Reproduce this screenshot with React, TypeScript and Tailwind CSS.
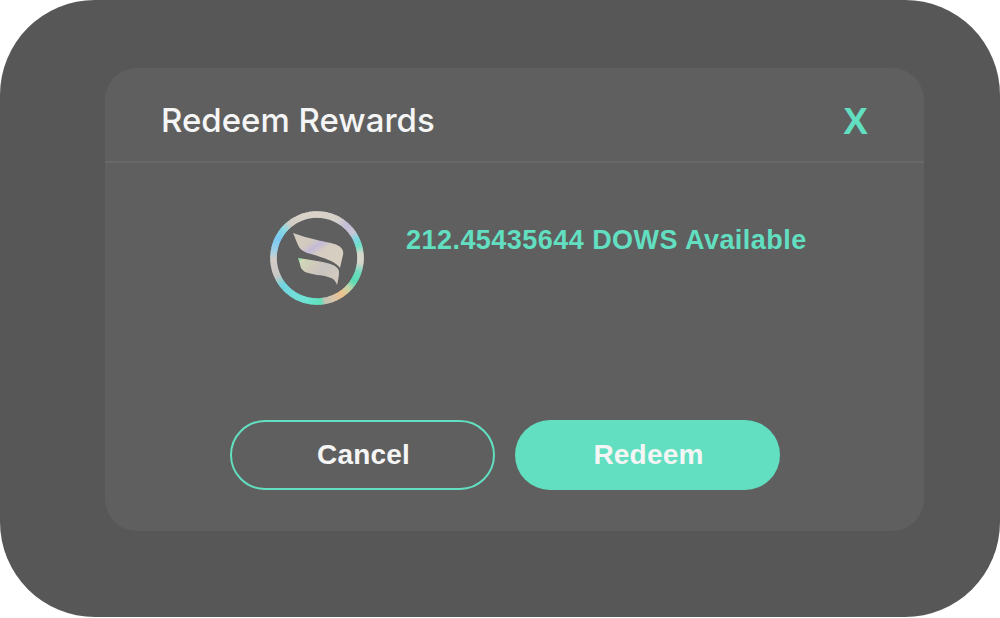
const stops: [number, string][] = [
  [0, "#d9d2c6"], [28, "#d6d0cc"], [42, "#c4bcd8"], [55, "#c9c6d4"], [64, "#7ed6e2"], [74, "#6fe0c4"], [84, "#d8d8cc"],
  [96, "#d9d4cc"], [108, "#74dcc0"], [122, "#55dcb4"], [134, "#c8d4a8"], [146, "#eec28e"], [158, "#d8c4aa"],
  [170, "#c0c4b4"], [175, "#5fe0b8"], [195, "#6ee4d4"], [215, "#74dcdc"], [232, "#70d4e0"], [246, "#c8c8c4"],
  [268, "#d4ccc6"], [280, "#a0d0ea"], [296, "#7cc8f4"], [310, "#86d8e4"], [322, "#d0ccc4"], [340, "#d8d2c8"], [360, "#d9d2c6"],
];

function hexToRgb(h: string) {
  return [1, 3, 5].map((i) => parseInt(h.slice(i, i + 2), 16));
}

function colorAt(a: number) {
  for (let i = 0; i < stops.length - 1; i++) {
    const [a0, c0] = stops[i];
    const [a1, c1] = stops[i + 1];
    if (a >= a0 && a <= a1) {
      const t = (a - a0) / (a1 - a0);
      const x = hexToRgb(c0);
      const y = hexToRgb(c1);
      return `rgb(${x.map((v, k) => Math.round(v + (y[k] - v) * t)).join(",")})`;
    }
  }
  return stops[0][1];
}

function Logo() {
  const cx = 48;
  const cy = 48;
  const r = 43.5;
  const segs = Array.from({ length: 120 }, (_, i) => i * 3);
  const pt = (a: number) => {
    const rad = ((a - 90) * Math.PI) / 180;
    return `${(cx + r * Math.cos(rad)).toFixed(2)} ${(cy + r * Math.sin(rad)).toFixed(2)}`;
  };
  return (
    <svg width="96" height="96" viewBox="0 0 96 96" className="block shrink-0">
      <defs>
        <linearGradient id="wingA" x1="0" y1="0" x2="1" y2="1">
          <stop offset="0" stopColor="#d4ccc0" />
          <stop offset="0.3" stopColor="#d2cabe" />
          <stop offset="0.42" stopColor="#c4bad8" />
          <stop offset="0.55" stopColor="#d6cdc0" />
          <stop offset="1" stopColor="#d8d0c4" />
        </linearGradient>
        <linearGradient id="wingB" x1="0" y1="0" x2="1" y2="0.5">
          <stop offset="0" stopColor="#7ee8a8" />
          <stop offset="0.12" stopColor="#d0d8b8" />
          <stop offset="0.45" stopColor="#cfc8bc" />
          <stop offset="0.65" stopColor="#c8c4c0" />
          <stop offset="1" stopColor="#d2cabe" />
        </linearGradient>
        <filter id="soft" x="-5%" y="-5%" width="110%" height="110%">
          <feGaussianBlur stdDeviation="0.5" />
        </filter>
      </defs>
      <g filter="url(#soft)">
        {segs.map((a) => (
          <path
            key={a}
            d={`M${pt(a)} A${r} ${r} 0 0 1 ${pt(a + 5)}`}
            fill="none"
            stroke={colorAt(a + 1.5)}
            strokeWidth="6.5"
          />
        ))}
        <path
          d="M24 23 C32 26 40 28 48 30 C56 32 64 33 68 35 C73 37 75 41 74 45 C73 49 72 53 71 58 C69 55 66 53 62 51 C56 48 46 45 38 43 C33 41 30 38 29 35 C27 31 26 27 24 23Z"
          fill="url(#wingA)"
        />
        <path
          d="M29 48 C36 49 42 50 48 51 C54 52 60 53 64 55 C68 57 70 59 70 62 C70 66 69 71 68 75 C67 72 65 69 62 68 C57 66 52 65 48 65 C43 64 39 63 36 62 C33 60 31 57 31 54 C30 52 30 50 29 48Z"
          fill="url(#wingB)"
        />
      </g>
    </svg>
  );
}

export default function App() {
  return (
    <div className="w-[1000px] h-[618px] bg-white overflow-hidden font-['Inter',sans-serif]">
      <div className="w-full h-[617px] rounded-[95px] bg-[#575757] pl-[105px] pt-[68px]">
        <div className="w-[819px] h-[463px] rounded-[32px] bg-[#5f5f5f] flex flex-col">
          <div className="h-[95px] shrink-0 border-b-2 border-[#696969] flex items-center justify-between pl-[56px] pr-[56px]">
            <span className="text-[33px] font-medium text-[#f5f5f5] leading-none pt-[12px]">Redeem Rewards</span>
            <span className="text-[37px] font-semibold text-[#62dfc0] leading-none pt-[14px] font-['Liberation_Sans',sans-serif]">X</span>
          </div>
          <div className="flex items-start pl-[164px] pt-[47px] gap-[41px] h-[257px] shrink-0">
            <Logo />
            <span className="text-[27px] tracking-[0.46px] font-bold text-[#62dfc0] leading-none pt-[17px] font-['Liberation_Sans',sans-serif]">212.45435644 DOWS Available</span>
          </div>
          <div className="flex pl-[125px] gap-[20px]">
            <button className="w-[265px] h-[70px] rounded-full border-2 border-[#62dfc0] pl-[2px] text-[28px] tracking-[0.2px] font-bold text-[#f5f5f5] font-['Liberation_Sans',sans-serif]">Cancel</button>
            <button className="w-[265px] h-[70px] rounded-full bg-[#62dfc0] pl-[2px] text-[28px] tracking-[0.2px] font-bold text-[#f5f5f5] font-['Liberation_Sans',sans-serif]">Redeem</button>
          </div>
        </div>
      </div>
    </div>
  );
}
